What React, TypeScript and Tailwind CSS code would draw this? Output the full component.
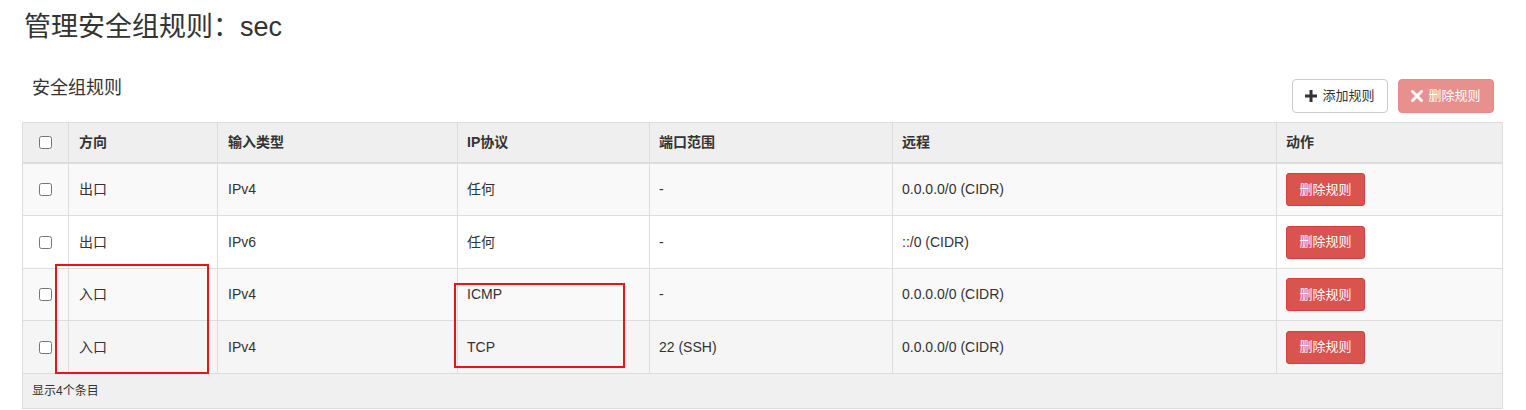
import React from "react";

const rows = [
  { dir: "出口", type: "IPv4", proto: "任何", port: "-", remote: "0.0.0.0/0 (CIDR)", bg: "bg-[#f9f9f9]", h: "h-[52px]" },
  { dir: "出口", type: "IPv6", proto: "任何", port: "-", remote: "::/0 (CIDR)", bg: "bg-white", h: "h-[53px]" },
  { dir: "入口", type: "IPv4", proto: "ICMP", port: "-", remote: "0.0.0.0/0 (CIDR)", bg: "bg-[#f9f9f9]", h: "h-[52px]" },
  { dir: "入口", type: "IPv4", proto: "TCP", port: "22 (SSH)", remote: "0.0.0.0/0 (CIDR)", bg: "bg-[#f5f5f5]", h: "h-[53px]" },
];

const cols = "grid grid-cols-[45px_149px_240px_192px_243px_384px_226px]";

function PlusIcon() {
  return (
    <svg width="12" height="12" viewBox="0 0 12 12" className="mr-[5px]">
      <rect x="4.5" y="0" width="3" height="12" fill="#333" />
      <rect x="0" y="4.5" width="12" height="3" fill="#333" />
    </svg>
  );
}

function XIcon() {
  return (
    <svg width="12" height="12" viewBox="0 0 12 12" className="mr-[5px]">
      <path d="M1.5 1.5 L10.5 10.5 M10.5 1.5 L1.5 10.5" stroke="#fff" strokeWidth="3" strokeLinecap="square" />
    </svg>
  );
}

export default function App() {
  return (
    <div
      className="relative w-[1526px] h-[410px] bg-white text-[#333] overflow-hidden"
      style={{ fontFamily: '"Liberation Sans", "Noto Sans CJK SC", Arial, sans-serif' }}
    >
      <div className="px-[22px]">
        <div className="h-[72px] pt-[9px]">
          <h1 className="ml-[2px] text-[27px] leading-[36px] font-normal text-[#333]">管理安全组规则：sec</h1>
        </div>
        <div className="h-[50px] flex justify-between">
          <span className="mt-[4px] ml-[10px] text-[18px] leading-[24px]">安全组规则</span>
          <div className="flex gap-[10px] mt-[7px] mr-[10px] h-[34px]">
            <button className="flex items-center justify-center w-[96px] h-[34px] border border-[#ccc] rounded-[4px] bg-white text-[13px] text-[#333]">
              <PlusIcon />
              添加规则
            </button>
            <button className="flex items-center justify-center w-[96px] h-[34px] border border-[#e58c89] rounded-[4px] bg-[#e8908d] text-[13px] text-white">
              <XIcon />
              删除规则
            </button>
          </div>
        </div>

        <div className="w-[1481px] border border-[#ddd] text-[14px]">
          <div className={`${cols} h-[41px] bg-[#efefef] border-b-2 border-[#ddd] font-bold`}>
            <div className="flex items-center justify-center">
              <input type="checkbox" className="w-[13px] h-[13px] m-0" />
            </div>
            <div className="flex items-center pl-[10px] border-l border-[#ddd]">方向</div>
            <div className="flex items-center pl-[10px] border-l border-[#ddd]">输入类型</div>
            <div className="flex items-center pl-[9px] border-l border-[#ddd]">IP协议</div>
            <div className="flex items-center pl-[9px] border-l border-[#ddd]">端口范围</div>
            <div className="flex items-center pl-[9px] border-l border-[#ddd]">远程</div>
            <div className="flex items-center pl-[9px] border-l border-[#ddd]">动作</div>
          </div>
          {rows.map((r, i) => (
            <div key={i} className={`${cols} ${r.h} ${r.bg} border-b border-[#ddd]`}>
              <div className="flex items-center justify-center">
                <input type="checkbox" className="w-[13px] h-[13px] m-0" />
              </div>
              <div className="flex items-center pl-[10px] border-l border-[#ddd]">{r.dir}</div>
              <div className="flex items-center pl-[10px] border-l border-[#ddd]">{r.type}</div>
              <div className="flex items-center pl-[9px] border-l border-[#ddd]">{r.proto}</div>
              <div className="flex items-center pl-[9px] border-l border-[#ddd]">{r.port}</div>
              <div className="flex items-center pl-[9px] border-l border-[#ddd]">{r.remote}</div>
              <div className="flex items-center pl-[9px] border-l border-[#ddd]">
                <button className="w-[79px] h-[33px] rounded-[3px] bg-[#d9534f] border border-[#d43f3a] text-white text-[13px]">
                  删除规则
                </button>
              </div>
            </div>
          ))}
          <div className="h-[34px] bg-[#f0f0f0] flex items-center pl-[9px] text-[12px]">显示4个条目</div>
        </div>
      </div>

      <div className="absolute left-[55px] top-[264px] w-[154px] h-[110px] border-2 border-[#e8141c]" />
      <div className="absolute left-[454px] top-[283px] w-[171px] h-[85px] border-2 border-[#e8141c]" />
    </div>
  );
}
